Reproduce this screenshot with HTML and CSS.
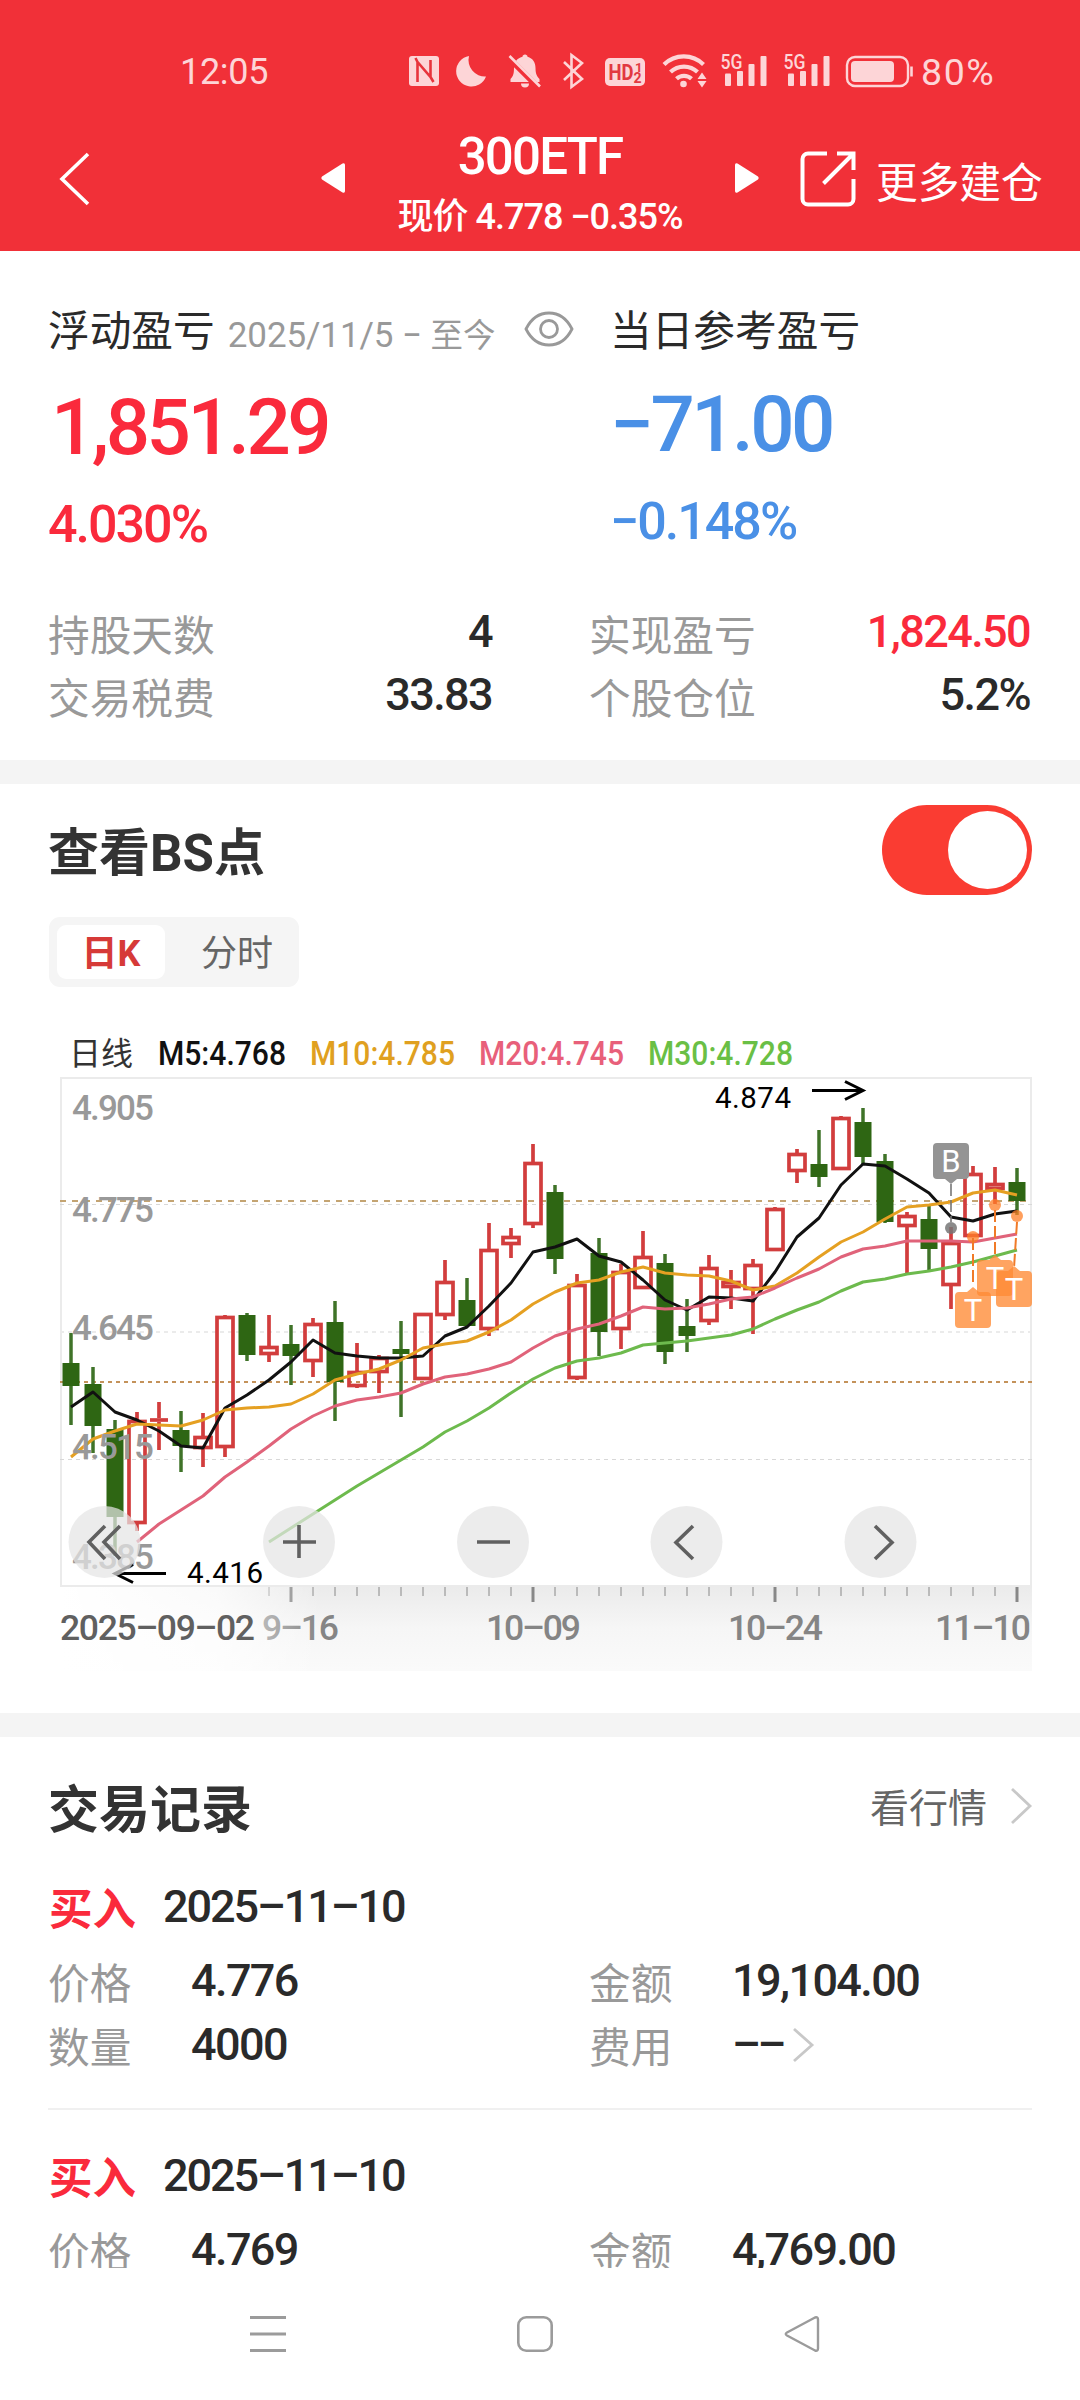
FILE: index.html
```html
<!DOCTYPE html>
<html lang="zh-CN">
<head>
<meta charset="utf-8">
<title>300ETF</title>
<link rel="stylesheet" href="styles.css">
</head>
<body>
<div class="app">
  <header class="header">
    <div class="status">
      <span class="clock">12:05</span>
      <svg class="status-icons" width="510" height="44" viewBox="404 48 510 44">
        <g fill="#fdd5d7">
          <rect x="409" y="56" width="30" height="30" rx="3"/>
          <path d="M417.500 82V62l13 15V60M417.500 62l-2-4M430.500 77l3 5" fill="none" stroke="#e8343c" stroke-width="2.600"/>
          <path d="M469 56a15.400 15.400 0 1 0 17 20.500A16.500 16.500 0 0 1 469 56z"/>
          <path d="M525 54.500c-1.500 0-2.500 1-2.500 2.200-6 1.500-8.500 6-8.500 11.300 0 6-1 8.500-3.500 11V82h29v-3c-2.500-2.500-4-5-4-11 0-5.300-2.500-9.800-8-11.300 0-1.200-1-2.200-2.500-2.200zM521 83.500h8a4 4 0 0 1-8 0z"/>
          <path d="M508.500 57.500L539 88" stroke="#f13038" stroke-width="6"/>
          <path d="M509.500 56L540 86.500" stroke="#fdd5d7" stroke-width="2.600"/>
          <path d="M564 62l18 17-10.500 8V55l10.500 8-18 17" fill="none" stroke="#fdd5d7" stroke-width="2.600"/>
          <rect x="605" y="58" width="40" height="28" rx="5"/>
          <g fill="#e23840" font-weight="700">
            <text x="608.500" y="80" font-size="22" textLength="25" lengthAdjust="spacingAndGlyphs">HD</text>
            <text x="635" y="71.500" font-size="13" textLength="6">1</text>
            <text x="633.500" y="83" font-size="14" textLength="8">2</text>
          </g>
          <g fill="none" stroke="#fdd5d7" stroke-width="4.200">
            <path d="M664 64.500a28 28 0 0 1 39.500 0"/>
            <path d="M670.500 72a19.500 19.500 0 0 1 27 0"/>
            <path d="M676.500 78.800a11 11 0 0 1 15 0"/>
          </g>
          <circle cx="683.500" cy="84" r="3.300"/>
          <path d="M697.500 79l4.500-6.500 4.500 6.500zM697.500 81h9l-4.500 6.500z"/>
          <g id="signal">
            <text x="720.500" y="69" font-size="20" font-weight="500" textLength="22" lengthAdjust="spacingAndGlyphs">5G</text>
            <rect x="725" y="73.500" width="6" height="12.500" rx="1"/>
            <rect x="737" y="71" width="6" height="15" rx="1"/>
            <rect x="748.500" y="64" width="6" height="22" rx="1"/>
            <rect x="760.500" y="56" width="6" height="30" rx="1"/>
          </g>
          <use href="#signal" x="63"/>
          <rect x="847" y="57" width="61" height="29" rx="8" fill="none" stroke="#fdd5d7" stroke-width="2.400"/>
          <rect x="851" y="61" width="43" height="21" rx="4"/>
          <path d="M911.500 66.500v10" stroke="#fdd5d7" stroke-width="2.600"/>
        </g>
      </svg>
      <span class="charge">80%</span>
    </div>
    <div class="navbar">
      <svg class="back" width="34" height="56" viewBox="0 0 34 56"><path d="M31 3L5 28l26 25" fill="none" stroke="#fff" stroke-width="3.600"/></svg>
      <svg class="prev" width="26" height="32" viewBox="0 0 26 32"><path d="M22.500 1.500q2.500-1 2.500 1.500v26q0 2.500-2.500 1.500L2 17.500q-1.500-1.500 0-3z" fill="#fff"/></svg>
      <div class="heading">
        <h1>300ETF</h1>
        <p>现价 4.778 −0.35%</p>
      </div>
      <svg class="next" width="26" height="32" viewBox="0 0 26 32"><path d="M3.500 1.500Q1 .5 1 3v26q0 2.500 2.500 1.500L24 17.500q1.500-1.500 0-3z" fill="#fff"/></svg>
      <svg class="share" width="56" height="56" viewBox="0 0 56 56"><path d="M27 2.500H8A5.500 5.500 0 0 0 2.500 8v40A5.500 5.500 0 0 0 8 53.500h40a5.500 5.500 0 0 0 5.500-5.500V28M37 2.500h16.500V19M53.500 2.500L23.500 32.500" fill="none" stroke="#fff" stroke-width="4"/></svg>
      <span class="more">更多建仓</span>
    </div>
  </header>

  <section class="summary">
    <div class="totals">
      <div class="total">
        <div class="total-head"><span class="label">浮动盈亏</span><span class="range">2025/11/5 − <span class="today">至今</span></span>
          <svg class="eye" width="50" height="36" viewBox="0 0 50 36" fill="none" stroke="#999" stroke-width="2.800"><path d="M2 18C7 8 15 2 25 2s18 6 23 16c-5 10-13 16-23 16S7 28 2 18z"/><circle cx="25" cy="18" r="8.500"/></svg>
        </div>
        <strong class="amount up">1,851.29</strong>
        <span class="rate up">4.030%</span>
      </div>
      <div class="total day">
        <div class="total-head"><span class="label">当日参考盈亏</span></div>
        <strong class="amount down">−71.00</strong>
        <span class="rate down">−0.148%</span>
      </div>
    </div>
    <dl class="fields">
      <div><dt>持股天数</dt><dd>4</dd></div>
      <div><dt>实现盈亏</dt><dd class="up">1,824.50</dd></div>
      <div><dt>交易税费</dt><dd>33.83</dd></div>
      <div><dt>个股仓位</dt><dd>5.2%</dd></div>
    </dl>
  </section>

  <section class="points">
    <div class="points-head">
      <h2>查看BS点</h2>
      <span class="toggle"><i class="knob"></i></span>
    </div>
    <div class="tabs"><span class="tab active">日K</span><span class="tab">分时</span></div>
    <svg class="chart" id="chart" width="1080" height="644" viewBox="0 1030 1080 644">
      <defs>
        <linearGradient id="band" x1="0" y1="0" x2="0" y2="1"><stop offset="0" stop-color="#ebebeb"/><stop offset=".5" stop-color="#f6f6f6"/><stop offset="1" stop-color="#fafafa"/></linearGradient>
        <linearGradient id="fade" x1="0" x2="1"><stop offset="0" stop-color="#fff"/><stop offset=".6" stop-color="#fff" stop-opacity=".75"/><stop offset="1" stop-color="#fff" stop-opacity="0"/></linearGradient>
      </defs>
      <g font-size="33" font-weight="500">
        <text x="69" y="1065" font-size="32" font-weight="400" fill="#333" textLength="64">日线</text>
        <text x="158" y="1065" fill="#111" textLength="128" lengthAdjust="spacingAndGlyphs">M5:4.768</text>
        <text x="310" y="1065" fill="#e0a020" textLength="145" lengthAdjust="spacingAndGlyphs">M10:4.785</text>
        <text x="479" y="1065" fill="#e8607a" textLength="145" lengthAdjust="spacingAndGlyphs">M20:4.745</text>
        <text x="648" y="1065" fill="#6abf45" textLength="145" lengthAdjust="spacingAndGlyphs">M30:4.728</text>
      </g>
      <rect x="61" y="1587" width="971" height="84" fill="url(#band)"/>
      <g id="ticks" stroke="#888"></g>
      <g font-size="35.500" font-weight="500" fill="#858585">
        <text x="262" y="1640" textLength="77">9–16</text>
        <rect x="61" y="1587" width="260" height="84" fill="url(#fade)"/>
        <text x="60" y="1640" textLength="195" fill="#606060">2025–09–02</text>
        <text x="486" y="1640" textLength="95">10–09</text>
        <text x="728" y="1640" textLength="95">10–24</text>
        <text x="935" y="1640" textLength="96">11–10</text>
      </g>
      <rect x="61" y="1078" width="970" height="508" fill="none" stroke="#ebebeb" stroke-width="2"/>
      <g fill="none">
        <path d="M60 1204.500H1032M60 1459.500H1032" stroke="#d8d8d8" stroke-dasharray="4 4"/>
        <path d="M60 1332H1032" stroke="#ebebeb" stroke-width="2" stroke-dasharray="4 4"/>
        <path d="M60 1201H1032" stroke="#c4a472" stroke-width="2" stroke-dasharray="6 6"/>
        <path d="M60 1382H1032" stroke="#c4925a" stroke-width="2" stroke-dasharray="4 4"/>
      </g>
      <g id="candles"></g>
      <g id="averages" fill="none" stroke-width="3" stroke-linejoin="round"></g>
      <g font-size="35" font-weight="500" fill="#999">
        <text x="72" y="1120" textLength="82">4.905</text>
        <text x="72" y="1222" textLength="82">4.775</text>
        <text x="72" y="1340" textLength="82">4.645</text>
        <text x="72" y="1458.500" textLength="82">4.515</text>
        <text x="72" y="1569" textLength="82">4.385</text>
      </g>
      <g font-size="29.500" fill="#000">
        <text x="715" y="1108" textLength="76">4.874</text>
        <text x="187" y="1583" textLength="76">4.416</text>
        <path d="M812 1090.500h50M845 1081.500l18 9-18 9M166 1573.500h-50M133 1564.500l-18 9 18 9" fill="none" stroke="#000" stroke-width="3"/>
      </g>
      <g font-size="31" fill="#fff" text-anchor="middle">
        <path d="M951 1184v38" stroke="#777" stroke-width="1.600" stroke-dasharray="12 4"/>
        <circle cx="951" cy="1228" r="6" fill="#777" fill-opacity=".85"/>
        <path d="M937 1143h28q4 0 4 4v28q0 4-4 4h-8l-6 5-6-5h-8q-4 0-4-4v-28q0-4 4-4z" fill="#949494"/>
        <text x="951" y="1172">B</text>
        <g fill="#ff7f27" fill-opacity=".75" stroke="#f07a28" stroke-width="0">
          <circle cx="973" cy="1237" r="6"/><circle cx="995" cy="1205" r="6"/><circle cx="1017" cy="1216" r="6"/>
          <path d="M973 1238v48M995 1210v46M1017 1222l-3 46" stroke-width="2" stroke-dasharray="12 4"/>
        </g>
        <g fill="#ff8a35" fill-opacity=".78">
          <path d="M959 1292h8l6-5 6 5h8q4 0 4 4v28q0 4-4 4h-28q-4 0-4-4v-28q0-4 4-4z"/>
          <path d="M981 1260h8l6-5 6 5h8q4 0 4 4v28q0 4-4 4h-28q-4 0-4-4v-28q0-4 4-4z"/>
          <path d="M1000 1271h8l6-5 6 5h8q4 0 4 4v28q0 4-4 4h-28q-4 0-4-4v-28q0-4 4-4z"/>
        </g>
        <text x="973" y="1321">T</text><text x="995" y="1289">T</text><text x="1014" y="1300">T</text>
      </g>
      <g fill="#e4e4e4" fill-opacity=".72">
        <circle cx="104.500" cy="1542" r="36"/><circle cx="299" cy="1542" r="36"/><circle cx="493" cy="1542" r="36"/><circle cx="686.500" cy="1542" r="36"/><circle cx="880.500" cy="1542" r="36"/>
      </g>
      <g fill="none" stroke="#606060" stroke-width="3.600">
        <path d="M105 1526l-16 16 16 17M120 1526l-16 16 16 17M283 1542h33M299 1525v33M477 1542h33M693 1526l-17 16.500 17 16.500M875 1526l17 16.500-17 16.500"/>
      </g>
    </svg>
  </section>

  <section class="records">
    <div class="records-head">
      <h2>交易记录</h2>
      <span class="quote">看行情</span>
      <svg class="chevron" width="24" height="38" viewBox="0 0 24 38"><path d="M2 2l18 17L2 36" fill="none" stroke="#c8c8c8" stroke-width="2.800"/></svg>
    </div>
    <article class="record">
      <div class="record-head"><b>买入</b><time>2025–11–10</time></div>
      <dl>
        <div><dt>价格</dt><dd>4.776</dd></div>
        <div><dt>金额</dt><dd>19,104.00</dd></div>
        <div><dt>数量</dt><dd>4000</dd></div>
        <div><dt>费用</dt><dd class="empty">––</dd><svg class="chevron fee" width="24" height="38" viewBox="0 0 24 38"><path d="M2 3l18 16L2 35" fill="none" stroke="#c8c8c8" stroke-width="2.800"/></svg></div>
      </dl>
    </article>
    <article class="record">
      <div class="record-head"><b>买入</b><time>2025–11–10</time></div>
      <dl>
        <div><dt>价格</dt><dd>4.769</dd></div>
        <div><dt>金额</dt><dd>4,769.00</dd></div>
      </dl>
    </article>
  </section>

  <nav class="system">
    <svg width="36" height="38" viewBox="0 0 36 38"><path d="M0 2.500h36M0 19h36M0 35.500h36" stroke="#9b9b9b" stroke-width="3"/></svg>
    <svg width="36" height="38" viewBox="0 0 36 38"><rect x="1.300" y="2.300" width="33.400" height="33.400" rx="8" fill="none" stroke="#9b9b9b" stroke-width="2.600"/></svg>
    <svg width="36" height="38" viewBox="0 0 36 38"><path d="M31 2.500L3 17.500q-2.500 1.500 0 3L31 35.500q3 1 3-2v-29q0-3-3-2z" fill="none" stroke="#9b9b9b" stroke-width="2.400"/></svg>
  </nav>
</div>
<script src="chart.js"></script>
</body>
</html>
```
FILE: styles.css
```css
* { box-sizing: border-box; margin: 0; padding: 0; }
body {
  width: 1080px;
  background: #fff;
  color: #2a2a2a;
  font-family: Roboto, "Noto Sans CJK SC", sans-serif;
}
.app { display: flex; flex-direction: column; height: 2400px; overflow: hidden; }
svg { display: block; flex: none; }
.up { color: #fa2a3c; }
.down { color: #4a90e6; }

.header { height: 251px; background: #f13038; color: #fff; padding-top: 46px; }
.status { display: flex; align-items: center; height: 52px; padding-left: 180px; color: #fdd5d7; font-size: 36px; line-height: 52px; }
.clock { width: 224px; letter-spacing: -.3px; }
.charge { margin-left: 7px; font-size: 37.500px; letter-spacing: 1.6px; }
.status-icons { position: relative; top: -2px; }

.navbar { display: flex; align-items: flex-start; padding-left: 57px; height: 153px; }
.back { margin-top: 53px; }
.prev { margin: 64px 0 0 229px; }
.heading { width: 388px; text-align: center; }
.heading h1 { margin-top: 29px; font-size: 51px; font-weight: 500; line-height: 60px; letter-spacing: -1.8px; }
.heading p { margin-top: 8px; font-size: 36px; font-weight: 500; line-height: 44px; letter-spacing: -1px; white-space: nowrap; }
.next { margin-top: 64px; }
.share { margin: 53px 0 0 40px; }
.more { margin: 60px 0 0 20px; font-size: 41.700px; line-height: 52px; }

.summary { height: 509px; padding: 56px 50px 0 48px; }
.totals { display: grid; grid-template-columns: 562px 1fr; }
.total { display: flex; flex-direction: column; }
.total-head { display: flex; height: 48px; line-height: 49px; }
.label { font-size: 41.700px; }
.range { margin: 4px 0 0 13px; width: 270px; font-size: 35px; color: #999; letter-spacing: -.1px; white-space: nowrap; }
.today { font-size: 32.500px; letter-spacing: 0; }
.eye { margin: 4px 0 0 26px; }
.amount { margin-top: 43px; font-size: 78px; line-height: 60px; font-weight: 500; letter-spacing: -3.500px; padding-left: 3px; }
.day .amount { margin-top: 40px; padding-left: 0; }
.rate { margin-top: 41px; font-size: 52px; line-height: 52px; font-weight: 500; letter-spacing: -2px; }
.fields { display: grid; grid-template-columns: 444px 441px; column-gap: 97px; margin-top: 49px; }
.fields div { display: flex; justify-content: space-between; height: 63px; line-height: 64px; }
dt { color: #999; font-size: 41.700px; padding-top: 5px; }
dd { font-size: 45px; font-weight: 500; letter-spacing: -1.600px; }

.points { height: 953px; border-top: 24px solid #f4f4f4; }
.points-head { display: flex; justify-content: space-between; height: 133px; padding: 21px 48px 0; }
h2 { font-size: 51px; font-weight: 700; line-height: 60px; color: #333; }
.points-head h2 { margin-top: 19px; }
.toggle { width: 150px; height: 90px; padding: 6px 5px 6px 66px; border-radius: 45px; background: #fa3c32; }
.knob { display: block; width: 79px; height: 78px; border-radius: 50%; background: #fff; }
.tabs { display: flex; width: 250px; height: 70px; margin-left: 49px; padding: 8px; border-radius: 11px; background: #f5f5f5; }
.tab { flex: 1; font-size: 36px; line-height: 58px; text-align: center; color: #666; padding-left: 18px; }
.tab.active { flex: none; width: 108px; height: 54px; border-radius: 9px; padding: 0; background: #fff; color: #d63a38; font-weight: 700; }
.chart { margin-top: 43px; }

.records { height: 555px; border-top: 24px solid #f4f4f4; overflow: hidden; }
.records-head { display: flex; height: 137px; padding: 44px 46px 0 48px; }
.records-head h2 { flex: 1; }
.quote { margin: -2px 23px 0 0; font-size: 39px; line-height: 60px; color: #666; }
.records-head .chevron { margin-top: 6px; }
.record { height: 236px; margin: 0 48px 33px; border-bottom: 2px solid #f0f0f0; }
.record-head { display: flex; height: 70px; line-height: 66px; }
.record-head b { margin: 2px 27px 0 1px; font-size: 43.500px; line-height: 70px; font-weight: 700; color: #fa2a3c; }
.record-head time { font-size: 45px; font-weight: 500; letter-spacing: -2.100px; }
.record dl { display: grid; grid-template-columns: 541px 1fr; }
.record dl div { display: flex; height: 64px; line-height: 73px; }
.record dt { width: 143px; }
.record dt { padding-top: 4px; }
.record .empty { letter-spacing: -3.500px; }
.fee { margin: 18px 0 0 9px; }

.system { display: flex; gap: 231px; padding: 47px 0 0 250px; height: 132px; background: #fff; }
```
FILE: chart.js
```js
// One row per trading day: [rising, high, open/close top, open/close bottom, low] in chart units.
const days = [
  [0,1333,1363,1386,1425],[0,1367,1384,1426,1453],[0,1420,1429,1517,1556],[1,1412,1420,1524,1531],
  [1,1402,1418,1422,1450],[0,1411,1430,1446,1472],[1,1413,1436,1449,1467],[1,1315,1316,1448,1457],
  [0,1313,1315,1355,1361],[1,1315,1346,1355,1362],[0,1325,1344,1356,1385],[1,1318,1323,1362,1377],
  [0,1301,1322,1382,1421],[1,1343,1371,1387,1388],[1,1355,1357,1373,1393],[0,1321,1349,1354,1417],
  [1,1313,1313,1380,1380],[1,1260,1281,1316,1320],[0,1278,1300,1326,1326],[1,1223,1249,1330,1336],
  [1,1228,1236,1245,1258],[1,1144,1162,1225,1228],[0,1185,1192,1259,1274],[1,1274,1284,1379,1380],
  [0,1238,1253,1332,1356],[1,1264,1271,1330,1349],[1,1231,1256,1289,1289],[0,1254,1263,1352,1364],
  [0,1299,1326,1336,1352],[1,1255,1267,1322,1325],[1,1270,1281,1288,1309],[1,1259,1264,1290,1334],
  [1,1207,1208,1251,1251],[1,1149,1153,1172,1183],[0,1130,1164,1177,1187],[1,1116,1117,1170,1170],
  [0,1108,1122,1157,1164],[0,1154,1161,1222,1223],[1,1212,1215,1227,1273],[0,1206,1219,1249,1271],
  [1,1227,1242,1286,1309],[1,1166,1173,1237,1237],[1,1167,1183,1190,1204],[0,1168,1182,1201,1215]
];
// Moving averages, each starting at a given day.
const averages = [
  ['#111', 0, [1407,1392,1412,1420,1431,1446,1448,1408,1395,1380,1362,1340,1353,1356,1358,1358,1356,1336,1327,1306,1283,1252,1247,1239,1256,1262,1280,1300,1310,1297,1298,1301,1272,1237,1218,1185,1164,1166,1179,1193,1217,1221,1214,1211]],
  ['#e5a022', 0, [1457,1439,1431,1424,1425,1426,1420,1410,1408,1407,1404,1394,1380,1374,1369,1360,1348,1344,1341,1332,1320,1304,1292,1283,1280,1272,1267,1273,1275,1276,1281,1290,1286,1273,1257,1242,1232,1219,1207,1205,1202,1193,1190,1195]],
  ['#e0637a', 3, [1542,1524,1510,1496,1477,1462,1446,1429,1416,1406,1400,1397,1393,1384,1377,1374,1369,1362,1348,1336,1329,1324,1316,1307,1309,1308,1304,1299,1297,1288,1278,1269,1257,1249,1246,1241,1241,1241,1242,1238,1234]],
  ['#6dba4d', 9, [1542,1528,1514,1500,1486,1473,1460,1447,1432,1421,1408,1393,1379,1368,1361,1358,1353,1345,1343,1341,1338,1335,1329,1319,1310,1302,1291,1282,1279,1274,1271,1267,1262,1256,1250]]
];
const x = day => 71 + day * 22;

document.getElementById('candles').innerHTML = days.map(([rising, high, top, bottom, low], i) => {
  const c = x(i);
  if (!rising) {
    return `<path d="M${c} ${high}V${low}" stroke="#3f7328" stroke-width="3.500"/><rect x="${c - 8.5}" y="${top}" width="17" height="${bottom - top}" fill="#2e6613"/>`;
  }
  const body = bottom - top < 5
    ? `<path d="M${c - 9} ${(top + bottom) / 2}h18"/>`
    : `<rect x="${c - 8}" y="${top + 1.5}" width="16" height="${bottom - top - 3}"/>`;
  return `<g fill="none" stroke="#d23d3d" stroke-width="3.700"><path d="M${c} ${high}V${top}M${c} ${bottom}V${low}"/>${body}</g>`;
}).join('');

document.getElementById('averages').innerHTML = averages.map(([color, start, ys]) =>
  `<polyline stroke="${color}" points="${ys.map((y, i) => x(start + i) + ',' + y).join(' ')}"/>`).join('');

document.getElementById('ticks').innerHTML = Array.from({ length: 35 }, (_, i) => {
  const day = i + 9;
  const major = (day - 10) % 11 === 0;
  return `<path d="M${x(day)} 1587v${major ? 15 : 9}" stroke-width="${major ? 3 : 1}"/>`;
}).join('');
```
